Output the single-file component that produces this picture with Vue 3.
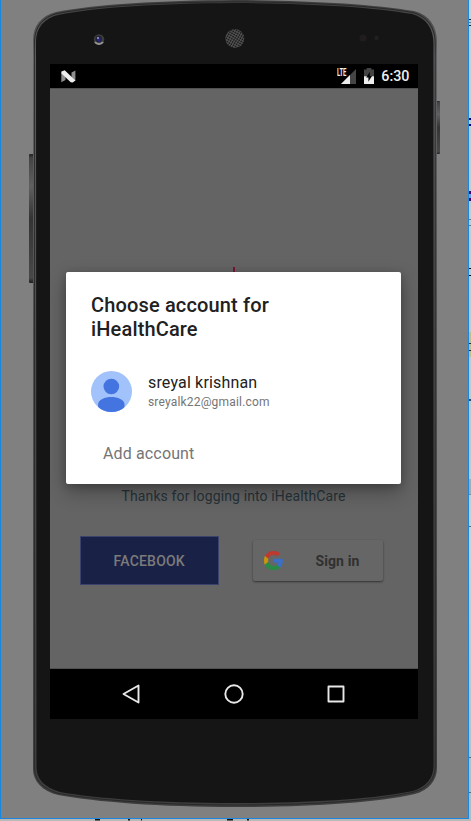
<script setup>
const edgeMarks = [
  { y: 19, h: 1, c: '#222' },
  { y: 22, h: 1, c: '#777' },
  { y: 25, h: 1, c: '#222' },
  { y: 118, h: 2, c: '#000066' },
  { y: 124, h: 2, c: '#000066' },
  { y: 191, h: 10, c: '#4b0062' },
  { y: 194, h: 4, c: '#7d9fd0' },
  { y: 219, h: 1, c: '#777' },
  { y: 225, h: 1, c: '#777' },
  { y: 268, h: 1, c: '#000' },
  { y: 275, h: 1, c: '#000' },
  { y: 332, h: 25, c: '#c9b98b' },
  { y: 343, h: 1, c: '#222' },
  { y: 350, h: 1, c: '#222' },
  { y: 399, h: 2, c: '#234a70' },
  { y: 479, h: 15, c: '#aaaaaa' },
  { y: 494, h: 1, c: '#888' },
  { y: 526, h: 1, c: '#666' },
  { y: 757, h: 1, c: '#666' },
  { y: 792, h: 1, c: '#666' }
]
const bottomMarks = [
  { x: 95, w: 5 }, { x: 128, w: 2 }, { x: 141, w: 1 }, { x: 227, w: 6 }, { x: 247, w: 2 }
]
</script>

<template>
  <main class="desktop">
    <svg class="backdrop" width="471" height="821" viewBox="0 0 471 821" aria-hidden="true">
      <defs>
        <linearGradient id="page" x1="0" y1="0" x2="0" y2="1">
          <stop offset="0" stop-color="#cdcdcd" />
          <stop offset=".55" stop-color="#c5c5c5" />
          <stop offset=".66" stop-color="#d0d0d0" />
          <stop offset="1" stop-color="#b8b8b8" />
        </linearGradient>
        <linearGradient id="key" x1="0" y1="0" x2="0" y2="1">
          <stop offset="0" stop-color="#222" />
          <stop offset=".03" stop-color="#444" />
          <stop offset=".25" stop-color="#606060" />
          <stop offset=".5" stop-color="#343434" />
          <stop offset=".96" stop-color="#484848" />
          <stop offset="1" stop-color="#1e1e1e" />
        </linearGradient>
        <linearGradient id="rim" x1="0" y1="0" x2="0" y2="1">
          <stop offset="0" stop-color="#3d3d3d" />
          <stop offset=".07" stop-color="#626365" />
          <stop offset=".4" stop-color="#505050" />
          <stop offset="1" stop-color="#3d3d3d" />
        </linearGradient>
        <pattern id="mesh" width="2.4" height="2.4" patternUnits="userSpaceOnUse" patternTransform="rotate(30)">
          <rect width="2.4" height="2.4" fill="#191919" />
          <path d="M0 .5H2.4M.5 0V2.4" stroke="#565656" stroke-width=".8" />
        </pattern>
      </defs>
      <rect width="471" height="821" fill="url(#page)" />
      <rect v-for="m in edgeMarks" :key="m.y" x="469" :y="m.y" width="2" :height="m.h" :fill="m.c" />
      <rect y="819" width="471" height="2" fill="#b9b9b9" />
      <rect v-for="m in bottomMarks" :key="m.x" :x="m.x" y="819" :width="m.w" height="1.5" fill="#111" />
      <rect width="469" height="819" fill="#1b86dc" />
      <rect x="1" width="467" height="818" fill="#808080" />

      <rect x="29" y="154" width="5" height="129" rx="1" fill="url(#key)" />
      <rect x="435.5" y="101" width="4.5" height="53" rx="1" fill="url(#key)" />
      <path fill="url(#rim)" d="M33 40C33 26 41 16 56 12C98 4 160 .5 235 0C310 .5 372 4 414 11C429 15 437 26 437 42V768C437 780 429 790 415 794C374 803 310 807 235 807C160 807 96 802 58 795C42 791 33 781 33 769Z" />
      <path fill="none" stroke="#292929" stroke-width="1" d="M34.6 41C34.6 27 43 17 57 13.5C98 5.5 160 2.3 235 1.8C310 2.3 372 5.5 413 12.5C427 16.5 435.2 27 435.2 43V767C435.2 779 427 788.5 414 792C374 801 310 805 235 805C160 805 96 800 59 793.5C43 789 34.6 780 34.6 768Z" />
      <path fill="#151515" d="M36 42C36 28 44 18.5 58 15C98 7 160 3.5 235 3C310 3.5 372 7 412 14C426 18 433.5 28 433.5 44V766C433.5 778 426 787 413 791C374 799 310 803 235 803C160 803 96 798.5 60 792C44 787 36.5 779 36.5 767Z" />

      <circle cx="99" cy="39.5" r="5.3" fill="#3d3d3d" />
      <path d="M95 42a5 5 0 0 0 8 0" fill="none" stroke="#959595" stroke-width="2" />
      <circle cx="98.7" cy="39" r="3.2" fill="#22223a" />
      <circle cx="98.7" cy="39.7" r="1.9" fill="#23238c" />
      <circle cx="98" cy="38" r="1" fill="#a6a6bd" />
      <circle cx="234.8" cy="38.5" r="9.5" fill="url(#mesh)" />
      <circle cx="363" cy="38" r="3.6" fill="#211d1d" />
      <circle cx="376.5" cy="38" r="2.4" fill="#211f1f" />
    </svg>

    <section class="screen">
      <header class="status">
        <svg class="nougat" width="15" height="13" viewBox="0 0 15 13">
          <path d="M.3 1.5 4.5 5V10L.3 12.3Z" fill="#8e8e8e" />
          <path d="M10.5 2.5 14.4.4V11L10.5 7.5Z" fill="#8e8e8e" />
          <path d="M.5 1.6 3.7.2 14.4 10.6 11.7 12.5 9.7 12.3.5 3.4Z" fill="#eee" />
        </svg>
        <span class="signal">
          <svg width="15" height="15" viewBox="0 0 15 15">
            <path d="M0 15 15 0V15Z" fill="#454545" />
            <path d="M0 15 9 6V15Z" fill="#eee" />
          </svg>
          <span class="lte">LTE</span>
        </span>
        <svg class="battery" width="10" height="16" viewBox="0 0 10 16">
          <path d="M0 1.5H2.7V0H7.3V1.5H10V9H0Z" fill="#444" />
          <path d="M0 8.3H10V16H0Z" fill="#eee" />
          <path d="M5.8 3.7 2.2 9.4H4.4V13.8L8 8H5.8Z" fill="#050505" />
        </svg>
        <time class="clock">6:30</time>
      </header>

      <div class="content">
        <span class="pulse"></span>
        <div class="login">
          <p class="thanks">Thanks for logging into iHealthCare</p>
          <div class="buttons">
            <button class="facebook">FACEBOOK</button>
            <button class="google">
              <svg width="19" height="19" viewBox="0 0 48 48">
                <path fill="#c0392e" stroke="#c0392e" d="M24 9.5c3.54 0 6.71 1.22 9.21 3.6l6.85-6.85C35.9 2.38 30.47 0 24 0 14.62 0 6.51 5.38 2.56 13.22l7.98 6.19C12.43 13.72 17.74 9.5 24 9.5z" />
                <path fill="#3b6fca" stroke="#3b6fca" d="M46.98 24.55c0-1.57-.15-3.09-.38-4.55H24v9.02h12.94c-.58 2.96-2.26 5.48-4.78 7.18l7.73 6c4.51-4.18 7.09-10.36 7.09-17.65z" />
                <path fill="#c8960c" stroke="#c8960c" d="M10.53 28.59c-.48-1.45-.76-2.99-.76-4.59s.27-3.14.76-4.59l-7.98-6.19C.92 16.46 0 20.12 0 24s.92 7.54 2.56 10.78l7.97-6.19z" />
                <path fill="#298c46" stroke="#298c46" d="M24 48c6.48 0 11.93-2.13 15.89-5.81l-7.73-6c-2.15 1.45-4.92 2.3-8.16 2.3-6.26 0-11.57-4.22-13.47-9.91l-7.98 6.19C6.51 42.62 14.62 48 24 48z" />
              </svg>
              <span>Sign in</span>
            </button>
          </div>
        </div>
        <section class="dialog">
          <h1>Choose account for<br />iHealthCare</h1>
          <div class="account">
            <svg width="41" height="41" viewBox="0 0 41 41">
              <defs><clipPath id="face"><circle cx="20.5" cy="20.5" r="20.5" /></clipPath></defs>
              <g clip-path="url(#face)">
                <rect width="41" height="41" fill="#a1c2fa" />
                <circle cx="20.3" cy="15.5" r="7.8" fill="#4374df" />
                <path d="M7.1 41V33.5C7.1 28.5 14 26 20.3 26S33.5 28.5 33.5 33.5V41Z" fill="#4374df" />
              </g>
            </svg>
            <div class="who">
              <span class="name">sreyal krishnan</span>
              <span class="mail">sreyalk22@gmail.com</span>
            </div>
          </div>
          <div class="add">Add account</div>
        </section>
      </div>

      <nav class="nav">
        <svg width="20" height="22" viewBox="0 0 20 22"><path d="M17.5 2.5V19.5L2.5 11Z" /></svg>
        <svg width="22" height="22" viewBox="0 0 22 22"><circle cx="11" cy="11" r="8.7" /></svg>
        <svg width="20" height="22" viewBox="0 0 20 22"><rect x="2.5" y="3.5" width="15" height="15" /></svg>
      </nav>
    </section>
  </main>
</template>

<style>
body { overflow: hidden; }
</style>

<style scoped>
.desktop {
  position: relative;
  box-sizing: border-box;
  width: 471px;
  height: 821px;
  padding: 64px 53px 102px 50px;
  font-family: Roboto, sans-serif;
}
.backdrop { position: absolute; inset: 0; display: block; }
.screen {
  position: relative;
  display: flex;
  flex-direction: column;
  width: 368px;
  height: 655px;
  background: #000;
}
.status {
  display: flex;
  align-items: center;
  box-sizing: border-box;
  height: 24px;
  padding: 0 8.5px 0 11px;
}
.nougat { margin-right: auto; }
.signal { position: relative; width: 19px; height: 15px; display: flex; justify-content: flex-end; margin-right: 8px; }
.lte {
  position: absolute;
  left: 0;
  top: 0;
  padding-right: 1px;
  background: #000;
  color: #eee;
  font: 700 10px/8px Roboto, sans-serif;
  letter-spacing: -.2px;
  transform: scaleX(.6);
  transform-origin: left;
}
.battery { margin-right: 7px; }
.clock { color: #eee; font-size: 14.3px; font-weight: 500; line-height: 24px; }
.content {
  position: relative;
  display: flex;
  flex-direction: column;
  align-items: center;
  justify-content: space-between;
  height: 581px;
  overflow: hidden;
  background: #646464;
  box-shadow: inset 0 1px #505050, inset 0 -1px #505050;
}
.pulse { width: 2px; height: 12px; margin-top: 179px; background: #7d1535; }
.login { width: 100%; padding-bottom: 84px; }
.thanks { margin: 0 0 31px; padding-right: 1px; text-align: center; color: #263238; font-size: 14px; line-height: 18px; letter-spacing: .12px; }
.buttons { display: flex; align-items: center; gap: 34px; padding-left: 30px; }
.facebook, .google { border: 0; padding: 0; font-family: inherit; font-weight: 500; font-size: 14px; letter-spacing: .2px; }
.facebook { width: 138.5px; height: 49px; border: 1px solid #3b426b; background: #1a2146; color: #7b7b7b; }
.google {
  display: flex;
  align-items: center;
  gap: 33px;
  width: 130px;
  height: 41px;
  padding: 0 0 0 11px;
  border-radius: 2px;
  background: #666;
  color: #303030;
  font-weight: 700;
  letter-spacing: .1px;
  box-shadow: 0 1px 2px #333;
}
.dialog {
  position: absolute;
  left: 16px;
  top: 184px;
  box-sizing: border-box;
  width: 335.4px;
  height: 212.4px;
  padding: 21px 25px 0;
  border-radius: 2px;
  background: #fff;
  box-shadow: 0 8px 20px rgba(0, 0, 0, .3), 0 2px 8px rgba(0, 0, 0, .2);
}
h1 { margin: 0; color: #212121; font-size: 20px; font-weight: 500; line-height: 24px; letter-spacing: .15px; }
.account { display: flex; gap: 16px; margin-top: 30px; }
.who { display: flex; flex-direction: column; }
.name { margin-top: 2px; color: #212121; font-size: 16px; line-height: 20px; letter-spacing: .17px; }
.mail { margin-top: 2px; color: #757575; font-size: 12px; line-height: 15px; letter-spacing: .18px; }
.add { margin: 32px 0 0 12px; color: #757575; font-size: 16px; line-height: 20px; letter-spacing: .14px; }
.nav { display: flex; align-items: center; justify-content: space-between; box-sizing: border-box; height: 50px; padding: 0 72px 1px 71px; }
.nav svg { fill: none; stroke: #e8e8e8; stroke-width: 1.9; stroke-linejoin: round; }
</style>
